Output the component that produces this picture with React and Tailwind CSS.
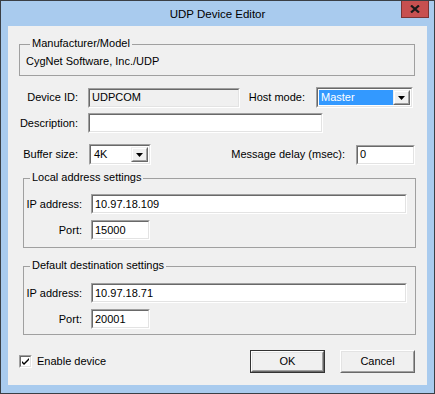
import React from 'react'

// classic sunken 3D edge used by edit boxes and combo boxes
function Sunken({ className = '', innerClass = '', children }) {
  return (
    <div className={`border border-t-[#a0a0a0] border-l-[#a0a0a0] border-b-white border-r-white ${className}`}>
      <div className={`h-full w-full border border-t-[#696969] border-l-[#696969] border-b-[#e3e3e3] border-r-[#e3e3e3] ${innerClass}`}>
        {children}
      </div>
    </div>
  )
}

function Edit({ value = '', width, readOnly }) {
  return (
    <Sunken className={`${width} h-[20px]`} innerClass={`${readOnly ? 'bg-[#f0f0f0]' : 'bg-white'} flex items-center pl-[2px]`}>
      <span className="leading-[13px]">{value}</span>
    </Sunken>
  )
}

function DropButton() {
  return (
    <div className="h-full w-[17px] border border-t-[#f0f0f0] border-l-[#f0f0f0] border-b-[#696969] border-r-[#696969]">
      <div className="h-full w-full bg-[#f0f0f0] border border-t-white border-l-white border-b-[#a0a0a0] border-r-[#a0a0a0] flex items-center justify-center">
        <svg width="7" height="4" viewBox="0 0 7 4">
          <path d="M0 0h7L3.5 4z" fill="#000" />
        </svg>
      </div>
    </div>
  )
}

function Combo({ value, width, selected }) {
  return (
    <Sunken className={`${width} h-[21px]`} innerClass="bg-white flex p-px">
      <div className={`flex-1 flex items-center pl-[2px] ${selected ? 'bg-[#3399ff] text-white' : ''}`}>
        <span className="leading-[13px]">{value}</span>
      </div>
      <DropButton />
    </Sunken>
  )
}

function Group({ title, className, labelLeft = 'left-[10px]', children }) {
  return (
    <div className={`relative border border-[#a0a0a0] ${className}`}>
      <span className={`absolute ${labelLeft} -top-[8px] bg-[#f0f0f0] px-[2px] leading-[13px]`}>{title}</span>
      {children}
    </div>
  )
}

function Button({ label, isDefault }) {
  return (
    <div className={`w-[75px] h-[23px] ${isDefault ? 'border border-[#333]' : ''}`}>
      <div className="h-full w-full border border-t-white border-l-white border-b-[#696969] border-r-[#696969]">
        <div className="h-full w-full bg-[#f0f0f0] border border-t-[#e3e3e3] border-l-[#e3e3e3] border-b-[#a0a0a0] border-r-[#a0a0a0] flex items-center justify-center">
          <span className="leading-[13px]">{label}</span>
        </div>
      </div>
    </div>
  )
}

function AddrRows({ ip, port }) {
  return (
    <div className="flex flex-col">
      <div className="flex items-center">
        <span className="w-[58px] text-right">IP address:</span>
        <div className="ml-[9px]"><Edit value={ip} width="w-[316px]" /></div>
      </div>
      <div className="flex items-center mt-[6px]">
        <span className="w-[58px] text-right">Port:</span>
        <div className="ml-[9px]"><Edit value={port} width="w-[59px]" /></div>
      </div>
    </div>
  )
}

export default function App() {
  return (
    <div className="w-[435px] h-[394px] bg-[#a9cbee] border border-[#3a3f45] flex flex-col text-[11px] text-black font-['Liberation_Sans',Arial,sans-serif]">
      {/* title bar */}
      <div className="h-[25px] grid grid-cols-[1fr_auto_1fr] items-start">
        <div />
        <span className="text-[11.5px] leading-[14px] mt-[6px] text-[#000]">UDP Device Editor</span>
        <div className="flex justify-end pr-[5px]">
          <div className="w-[28px] h-[17px] bg-[#c75050] border border-[#7a3434] border-t-0 flex items-center justify-center">
            <svg width="10" height="8" viewBox="0 0 10 8">
              <path d="M1 0.5l8 7M9 0.5l-8 7" stroke="#1a1a1a" strokeWidth="2.2" />
            </svg>
          </div>
        </div>
      </div>

      {/* client area */}
      <div className="ml-[7px] w-[419px] h-[359px] bg-[#f0f0f0] flex flex-col leading-[13px]">
        <Group title="Manufacturer/Model" className="mt-[18px] ml-[11px] w-[396px] h-[32px]">
          <div className="pl-[6px] pt-[10px]">CygNet Software, Inc./UDP</div>
        </Group>

        <div className="flex items-center mt-[11px]">
          <span className="w-[70px] text-right">Device ID:</span>
          <div className="ml-[10px]"><Edit value="UDPCOM" width="w-[152px]" readOnly /></div>
          <span className="w-[65px] text-right">Host mode:</span>
          <div className="ml-[11px]"><Combo value="Master" width="w-[97px]" selected /></div>
        </div>

        <div className="flex items-center mt-[5px]">
          <span className="w-[70px] text-right">Description:</span>
          <div className="ml-[10px]"><Edit width="w-[235px]" /></div>
        </div>

        <div className="flex items-center mt-[11px]">
          <span className="w-[70px] text-right">Buffer size:</span>
          <div className="ml-[11px]"><Combo value="4K" width="w-[62px]" /></div>
          <span className="w-[194px] text-right">Message delay (msec):</span>
          <div className="ml-[11px]"><Edit value="0" width="w-[59px]" /></div>
        </div>

        <Group title="Local address settings" labelLeft="left-[6px]" className="mt-[13px] ml-[15px] w-[393px] h-[70px]">
          <div className="pt-[15px]">
            <AddrRows ip="10.97.18.109" port="15000" />
          </div>
        </Group>

        <Group title="Default destination settings" labelLeft="left-[6px]" className="mt-[18px] ml-[15px] w-[393px] h-[69px]">
          <div className="pt-[16px]">
            <AddrRows ip="10.97.18.71" port="20001" />
          </div>
        </Group>

        <div className="flex items-center mt-[15px] ml-[11px] pr-[12px]">
          <div className="w-[13px] h-[13px] border border-t-[#a0a0a0] border-l-[#a0a0a0] border-b-white border-r-white">
            <div className="h-full w-full bg-white border border-t-[#696969] border-l-[#696969] border-b-[#e3e3e3] border-r-[#e3e3e3] flex items-center justify-center">
              <svg width="7" height="7" viewBox="0 0 7 7">
                <path d="M0 3l2 2 5-5v2l-5 5-2-2z" fill="#000" />
              </svg>
            </div>
          </div>
          <span className="ml-[5px]">Enable device</span>
          <div className="ml-auto flex gap-[15px]">
            <Button label="OK" isDefault />
            <Button label="Cancel" />
          </div>
        </div>
      </div>
    </div>
  )
}
